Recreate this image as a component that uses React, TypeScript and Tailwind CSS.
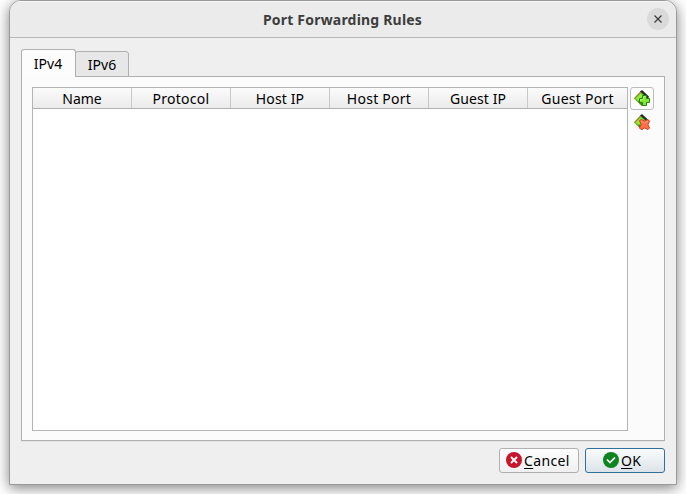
import type { ReactNode } from "react";

const columns = [
  { label: "Name", text: "text-[14px]" },
  { label: "Protocol", text: "text-[14px] tracking-[0.25px]" },
  { label: "Host IP", text: "text-[14px] tracking-[0.15px]" },
  { label: "Host Port", text: "text-[14px] tracking-[0.25px]" },
  { label: "Guest IP", text: "text-[14px] tracking-[0.1px]" },
  { label: "Guest Port", text: "text-[14px] tracking-[0.25px]" },
];

function RuleDiamond({ children }: { children: ReactNode }) {
  return (
    <svg width="16" height="16" viewBox="0 0 16 16" className="block shrink-0">
      <path d="M0 8.500 7 1 15 8 8 16Z" fill="#62d024" />
      <path d="M2 8.500 7 3.500 9 6 5 11Z" fill="#8ef03a" />
      <path d="M4 12 8 16l1-1-4-5Z" fill="#3a8a18" />
      <path d="M0.300 8.500 7 1.500" stroke="#e0452c" strokeWidth="1" />
      <path d="M0.300 8.500 7.500 15.700" stroke="#c8742b" strokeWidth="1" strokeDasharray="1.200 1" />
      <path d="M6 1.500 8 0l7 6.500L14 8.500Z" fill="#282b28" />
      {children}
    </svg>
  );
}

function AddIcon() {
  return (
    <RuleDiamond>
      <path d="M8.500 5.500h4v3h3v4h-3v3h-4v-3h-3v-4h3Z" fill="#83e735" stroke="#23810f" />
      <path d="M9.500 9V6.500h2M6.500 11V9.500h3" fill="none" stroke="#b5f56c" />
    </RuleDiamond>
  );
}

function RemoveIcon() {
  return (
    <RuleDiamond>
      <path d="M5.500 6.500 7 5.500l3.500 1.500L14 5.500l1.500 1.500-1.500 3.500 1.500 3.500-1.500 1.500-3.500-1.500L7 15.500 5.500 14 7 10.500Z" fill="#ff7048" stroke="#d63f22" />
      <path d="m7 7 3.500 2L14 7" fill="none" stroke="#ff9d7c" />
    </RuleDiamond>
  );
}

export default function App() {
  return (
    <div className="h-[494px] w-[686px] overflow-hidden bg-white pl-[9px] font-['Noto_Sans',sans-serif] text-[14px] text-black">
      <div className="flex h-[485px] w-[668px] flex-col overflow-hidden rounded-t-[12px] border border-[#999] bg-[#efefef] shadow-[0_3px_14px_rgba(0,0,0,0.5)]">
        <header className="grid h-[37px] shrink-0 grid-cols-[1fr_auto_1fr] items-center border-b border-[#b8b8b8] bg-[#ebebeb] pr-[7px] pl-[6px] shadow-[inset_0_1px_#f8f8f8]">
          <span />
          <h1 className="pt-px text-[14px] leading-5 font-bold tracking-[0.2px] text-[#3d3d3d]">Port Forwarding Rules</h1>
          <button aria-label="Close" className="grid size-[22px] place-items-center justify-self-end rounded-full bg-[#dadada]">
            <svg width="8" height="8" viewBox="0 0 8 8"><path d="m.5.5 7 7m0-7-7 7" stroke="#3d3d3d" strokeWidth="1.300" /></svg>
          </button>
        </header>
        <main className="flex min-h-0 flex-1 flex-col px-[11px] pt-[11px]">
          <div className="z-10 -mb-px flex h-7 shrink-0 items-end">
            <button className="h-7 w-[55px] rounded-t-[3px] border border-b-0 border-[#b0b0b0] bg-[#fcfcfc] pt-px pr-px leading-5 tracking-[0.1px]">IPv4</button>
            <button className="-ml-px h-[26px] w-[54px] rounded-t-[3px] border border-[#b0b0b0] bg-[#e7e7e7] pt-[2px] leading-5 tracking-[0.1px]">IPv6</button>
          </div>
          <section className="flex h-[365px] shrink-0 gap-[2px] border border-[#b0b0b0] bg-[#fbfbfb] pt-[10px] pl-[10px] shadow-[0_1px_#e4e4e4]">
            <div className="h-[344px] w-[596px] border border-[#b4b4b4] bg-white">
              <div className="grid h-[21px] grid-cols-[99px_99px_99px_99px_99px_99px] border-b border-[#b0b0b0] bg-linear-to-b from-[#fbfbfb] to-[#ebebeb]">
                {columns.map(({ label, text }) => (
                  <div key={label} className="flex items-center justify-center border-r border-[#c8c8c8] pt-[2px] last:border-r-0">
                    <span className={`${text} leading-[18px] whitespace-nowrap`}>{label}</span>
                  </div>
                ))}
              </div>
            </div>
            <div className="flex w-6 flex-col items-center gap-[4px]">
              <button aria-label="Add rule" className="flex h-[23px] w-6 shrink-0 items-start justify-center rounded-[3px] border border-[#bcbcbc] bg-[#fdfdfd] pt-[2px]"><AddIcon /></button>
              <button aria-label="Remove rule"><RemoveIcon /></button>
            </div>
          </section>
          <footer className="mt-[7px] flex justify-end gap-[6px]">
            <button className="flex h-[25px] w-20 items-center gap-[2px] rounded-[3px] border border-[#b1b1b1] bg-linear-to-b from-[#fdfdfd] to-[#f0f0f0] pb-px pl-[6px]">
              <svg width="16" height="16" viewBox="0 0 16 16"><circle cx="8" cy="8" r="8" fill="#c7162b" /><path d="m5 5 6 6m0-6-6 6" stroke="white" strokeWidth="1.800" /></svg>
              <span className="pt-px leading-5 tracking-[0.35px]"><span className="underline decoration-1 underline-offset-2">C</span>ancel</span>
            </button>
            <button className="flex h-[25px] w-20 items-center gap-[2px] rounded-[3px] border border-[#30709b] bg-linear-to-b from-[#fafcfd] to-[#dce3e8] pb-px pl-[17px]">
              <svg width="16" height="16" viewBox="0 0 16 16"><circle cx="8" cy="8" r="8" fill="#0e8420" /><path d="m4 7.500 3 3 5-5" fill="none" stroke="white" strokeWidth="1.700" /></svg>
              <span className="pt-px leading-5 tracking-[0.35px]"><span className="underline decoration-1 underline-offset-2">O</span>K</span>
            </button>
          </footer>
        </main>
      </div>
    </div>
  );
}
